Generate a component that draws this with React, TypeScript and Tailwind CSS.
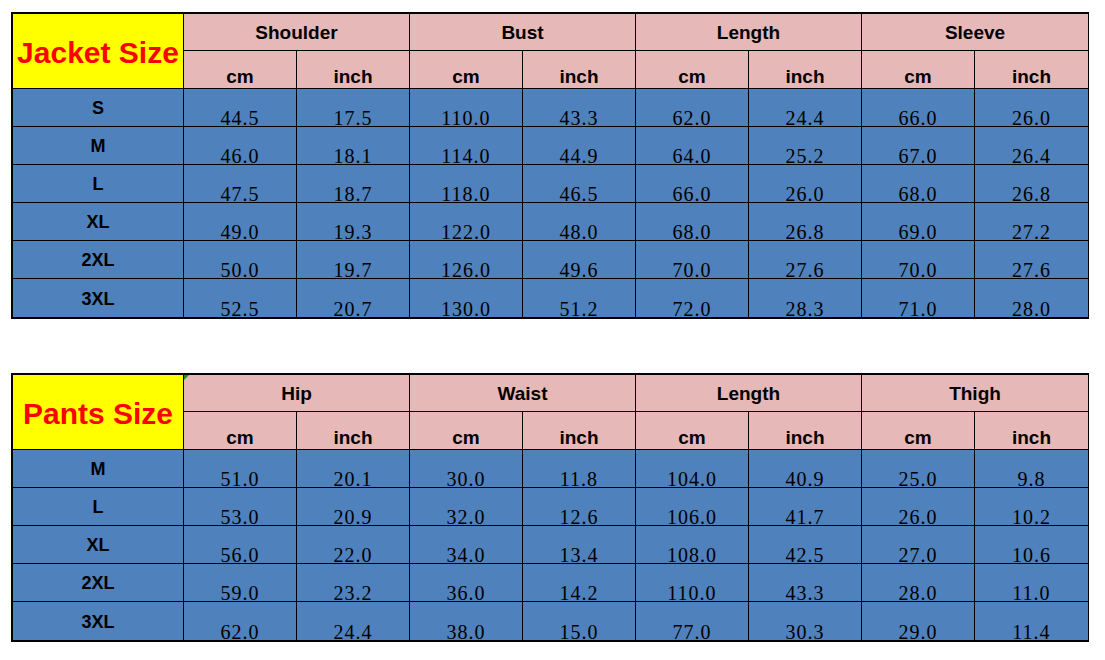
type SizeTableProps = {
  title: string;
  groups: string[];
  rows: { size: string; values: string[] }[];
  corner?: boolean;
};

const SizeTable = ({ title, groups, rows, corner }: SizeTableProps) => {
  return (
    <div className="ml-[11px] w-[1078px] border-2 border-black font-['Liberation_Sans',Arial,sans-serif]">
      <div className="grid grid-cols-[171px_repeat(8,113px)] grid-rows-[37px_38px] auto-rows-[38px]">
        <div className="row-span-2 flex items-center justify-center border-r border-b border-black bg-[#ffff00] pt-[3px] text-[30px] font-bold text-[#ff0000]">
          {title}
        </div>
        {groups.map((g, i) => (
          <div
            key={g}
            className={`relative col-span-2 flex items-center justify-center border-b border-black bg-[#e6b8b7] pt-[3px] text-[19px] font-bold text-black ${i < groups.length - 1 ? 'border-r' : ''}`}
          >
            {corner && i === 0 && (
              <span className="absolute left-0 top-0 h-0 w-0 border-t-[5px] border-r-[5px] border-t-[#1e8a2e] border-r-transparent" />
            )}
            {g}
          </div>
        ))}
        {groups.flatMap((g, i) =>
          ['cm', 'inch'].map((u, j) => (
            <div
              key={g + u}
              className={`flex items-end justify-center border-b border-black bg-[#e6b8b7] pb-[2px] text-[19px] font-bold leading-none text-black ${i === groups.length - 1 && j === 1 ? '' : 'border-r'}`}
            >
              {u}
            </div>
          ))
        )}
        {rows.map((r, ri) => {
          const last = ri === rows.length - 1;
          return [
            <div
              key={r.size}
              className={`flex items-center justify-center border-r border-black bg-[#4f81bd] pt-[2px] text-[18px] font-bold text-black ${last ? '' : 'border-b'}`}
            >
              {r.size}
            </div>,
            ...r.values.map((v, vi) => (
              <div
                key={r.size + vi}
                className={`flex items-end justify-center border-black bg-[#4f81bd] font-['Liberation_Serif','Times_New_Roman',serif] text-[20px] leading-[16px] tracking-[1px] text-black ${last ? '' : 'border-b'} ${vi === r.values.length - 1 ? '' : 'border-r'}`}
              >
                {v}
              </div>
            )),
          ];
        })}
      </div>
    </div>
  );
};

const jacketRows = [
  { size: 'S', values: ['44.5', '17.5', '110.0', '43.3', '62.0', '24.4', '66.0', '26.0'] },
  { size: 'M', values: ['46.0', '18.1', '114.0', '44.9', '64.0', '25.2', '67.0', '26.4'] },
  { size: 'L', values: ['47.5', '18.7', '118.0', '46.5', '66.0', '26.0', '68.0', '26.8'] },
  { size: 'XL', values: ['49.0', '19.3', '122.0', '48.0', '68.0', '26.8', '69.0', '27.2'] },
  { size: '2XL', values: ['50.0', '19.7', '126.0', '49.6', '70.0', '27.6', '70.0', '27.6'] },
  { size: '3XL', values: ['52.5', '20.7', '130.0', '51.2', '72.0', '28.3', '71.0', '28.0'] },
];

const pantsRows = [
  { size: 'M', values: ['51.0', '20.1', '30.0', '11.8', '104.0', '40.9', '25.0', '9.8'] },
  { size: 'L', values: ['53.0', '20.9', '32.0', '12.6', '106.0', '41.7', '26.0', '10.2'] },
  { size: 'XL', values: ['56.0', '22.0', '34.0', '13.4', '108.0', '42.5', '27.0', '10.6'] },
  { size: '2XL', values: ['59.0', '23.2', '36.0', '14.2', '110.0', '43.3', '28.0', '11.0'] },
  { size: '3XL', values: ['62.0', '24.4', '38.0', '15.0', '77.0', '30.3', '29.0', '11.4'] },
];

export default function App() {
  return (
    <div className="h-[660px] w-[1105px] bg-white pt-[12px]">
      <SizeTable title="Jacket Size" groups={['Shoulder', 'Bust', 'Length', 'Sleeve']} rows={jacketRows} />
      <div className="mt-[54px]">
        <SizeTable title="Pants Size" groups={['Hip', 'Waist', 'Length', 'Thigh']} rows={pantsRows} corner />
      </div>
    </div>
  );
}
